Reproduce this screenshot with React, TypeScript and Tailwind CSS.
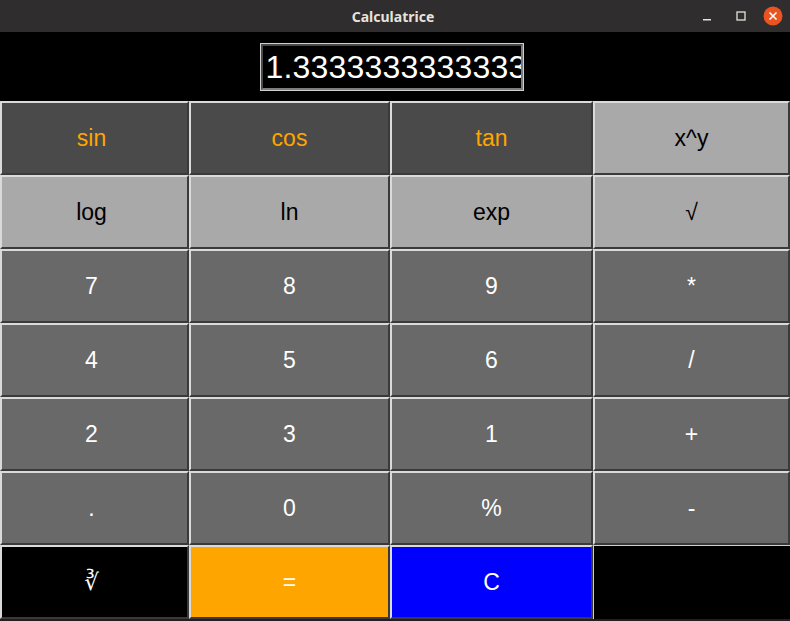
import React from 'react';

type Key = {
  label: string;
  cls: string;
  extra?: string;
};

const trig = 'bg-[#4a4a4a] text-[#ffa500]';
const sci = 'bg-[#a9a9a9] text-black';
const num = 'bg-[#696969] text-white';

const keys: Key[] = [
  { label: 'sin', cls: trig },
  { label: 'cos', cls: trig },
  { label: 'tan', cls: trig },
  { label: 'x^y', cls: sci },
  { label: 'log', cls: sci },
  { label: 'ln', cls: sci },
  { label: 'exp', cls: sci },
  { label: '√', cls: sci },
  { label: '7', cls: num },
  { label: '8', cls: num },
  { label: '9', cls: num },
  { label: '*', cls: num },
  { label: '4', cls: num },
  { label: '5', cls: num },
  { label: '6', cls: num },
  { label: '/', cls: num },
  { label: '2', cls: num },
  { label: '3', cls: num },
  { label: '1', cls: num },
  { label: '+', cls: num },
  { label: '.', cls: num },
  { label: '0', cls: num },
  { label: '%', cls: num },
  { label: '-', cls: num },
  { label: '∛', cls: 'bg-black text-white', extra: "font-['DejaVu_Sans'] text-[21px]" },
  { label: '=', cls: 'bg-[#ffa500] text-white' },
  { label: 'C', cls: 'bg-[#0000ff] text-white' },
];

const TitleBar: React.FC = () => (
  <div className="h-[32px] bg-[#2f2d2d] flex items-center relative">
    <div className="flex-1 text-center text-[14px] font-bold text-[#e6e3dd] font-['Noto_Sans',sans-serif] pr-[4px]">
      Calculatrice
    </div>
    <div className="absolute right-[7px] top-0 h-[32px] flex items-center">
      {/* minimize */}
      <svg width="12" height="12" viewBox="0 0 12 12" className="mr-[22px]">
        <rect x="2" y="9" width="8" height="1.5" fill="#e6e3dd" />
      </svg>
      {/* maximize */}
      <svg width="12" height="12" viewBox="0 0 12 12" className="mr-[16px]">
        <rect x="2" y="2" width="8" height="8" fill="none" stroke="#e6e3dd" strokeWidth="1.3" />
      </svg>
      {/* close */}
      <svg width="20" height="20" viewBox="0 0 20 20">
        <circle cx="10" cy="10" r="9.5" fill="#e95420" />
        <path d="M6.5 6.5 L13.5 13.5 M13.5 6.5 L6.5 13.5" stroke="#fff" strokeWidth="1.6" />
      </svg>
    </div>
  </div>
);

const Display: React.FC = () => (
  <div className="h-[69px] bg-black flex items-start justify-center pt-[11px] pr-[7px]">
    <div className="w-[264px] h-[48px] border border-[#d0d0d0] bg-black">
      <div className="h-full border-2 border-t-[#4a4a4a] border-l-[#4a4a4a] border-b-[#7d7d7d] border-r-[#7d7d7d] overflow-hidden flex items-center pl-[3px]">
        <span className="text-white text-[32px] leading-none whitespace-nowrap font-['Liberation_Sans',Arial,sans-serif] tracking-[0.2px]">
          1.3333333333333333
        </span>
      </div>
    </div>
  </div>
);

export default function App() {
  return (
    <div className="w-[790px] h-[621px] bg-[#2a1a24] overflow-hidden flex flex-col">
      <TitleBar />
      <Display />
      <div className="grid grid-cols-[189px_201px_203px_197px] grid-rows-[repeat(7,74px)] bg-black font-['Liberation_Sans',Arial,sans-serif]">
        {keys.map((k, i) => (
          <button
            key={i}
            className={`${k.cls} border-t-2 border-l-2 border-t-[#dadada] border-l-[#dadada] border-b-2 border-r-2 border-b-[#3a3a3a] border-r-[#3a3a3a] flex items-center justify-center text-[23px] ${i % 4 === 0 ? 'pr-[6px]' : ''} ${k.extra ?? ''}`}
          >
            {k.label}
          </button>
        ))}
        <div className="bg-black border-t border-l border-[#cfcfcf]" />
      </div>
    </div>
  );
}
